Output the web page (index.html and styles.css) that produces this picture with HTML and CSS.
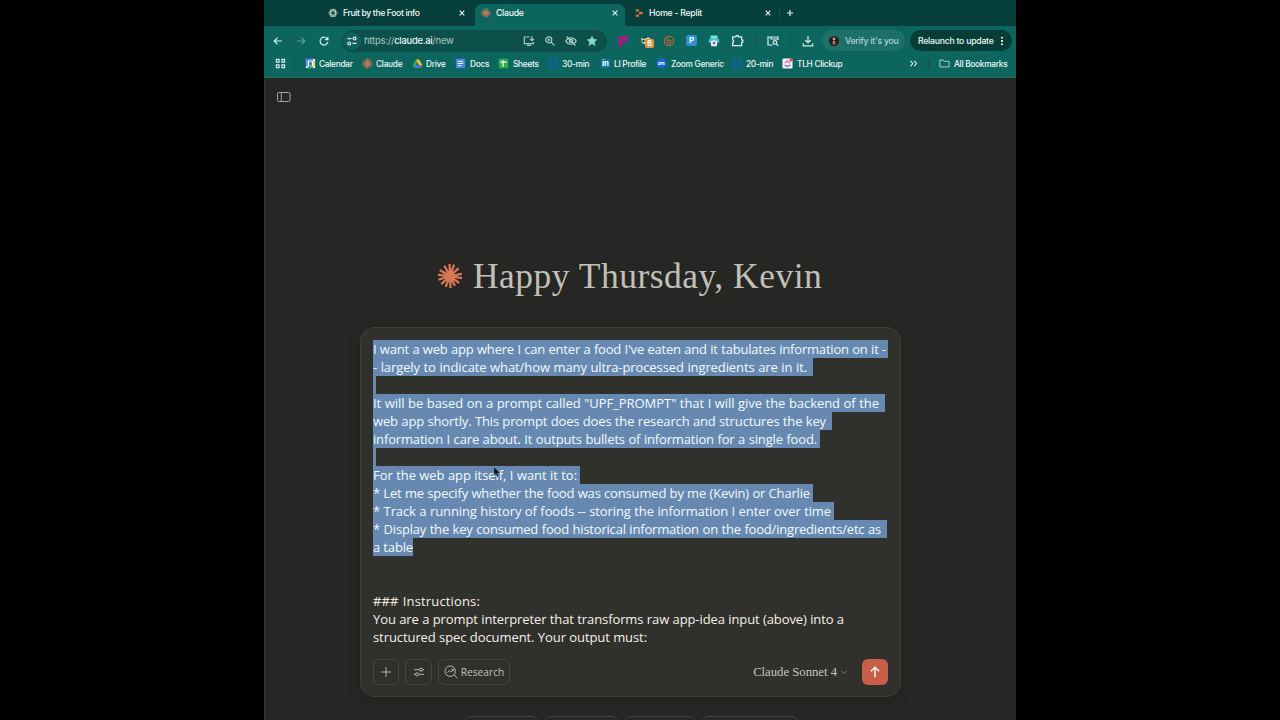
FILE: index.html
```html
<!DOCTYPE html>
<html lang="en">
<head>
  <meta charset="UTF-8">
  <title>Claude</title>
  <link rel="stylesheet" href="styles.css">
</head>
<body>
  <div class="browser">
    <!-- Tabs -->
    <div class="tabs">
      <div class="tab">
        <svg class="fav" viewBox="0 0 12 12" fill="none" stroke="#c3d6d4" stroke-width="0.9"><ellipse cx="6" cy="6" rx="5" ry="2.5"/><ellipse cx="6" cy="6" rx="5" ry="2.5" transform="rotate(60 6 6)"/><ellipse cx="6" cy="6" rx="5" ry="2.5" transform="rotate(120 6 6)"/></svg>
        <span class="tab-title t-fruit">Fruit by the Foot info</span>
        <svg class="close" viewBox="0 0 8 8"><path d="M1.700 1.700l4.600 4.600M6.300 1.700L1.700 6.300"/></svg>
      </div>
      <div class="tab active">
        <svg class="fav" viewBox="0 0 24 24"><use href="#burst"/></svg>
        <span class="tab-title">Claude</span>
        <svg class="close" viewBox="0 0 8 8"><path d="M1.700 1.700l4.600 4.600M6.300 1.700L1.700 6.300"/></svg>
      </div>
      <div class="tab">
        <svg class="fav" viewBox="0 0 12 12" fill="#e0702e"><rect x="2" y="1.5" width="4" height="2.8" rx=".6"/><rect x="6" y="4.6" width="4.4" height="2.8" rx=".6"/><rect x="2" y="7.7" width="4" height="2.8" rx=".6"/></svg>
        <span class="tab-title">Home - Replit</span>
        <svg class="close" viewBox="0 0 8 8"><path d="M1.700 1.700l4.600 4.600M6.300 1.700L1.700 6.300"/></svg>
      </div>
      <i class="sep"></i>
      <svg class="new-tab" viewBox="0 0 8 8"><path d="M4 .9v6.2M.9 4h6.2"/></svg>
    </div>

    <!-- Toolbar -->
    <div class="toolbar">
      <div class="nav">
        <svg viewBox="0 0 12 12"><path d="M10 6H2.3M5.6 2.6L2.2 6l3.4 3.4"/></svg>
        <svg class="dim" viewBox="0 0 12 12"><path d="M2 6h7.7M6.4 2.6L9.8 6 6.4 9.4"/></svg>
        <svg viewBox="0 0 12 12"><path d="M9.4 4.2A3.9 3.9 0 1 0 9.8 7M9.9 1.8v2.9H7"/></svg>
      </div>
      <div class="address">
        <span class="site"><svg viewBox="0 0 12 12"><path d="M1.500 3.600h4M6.500 8.400h4"/><circle cx="8.600" cy="3.600" r="1.400"/><circle cx="3.300" cy="8.400" r="1.400"/></svg></span>
        <span class="url">https://<b>claude.ai</b>/new</span>
        <svg viewBox="0 0 12 12"><path d="M6.500 2H1.300v6.600h9.200V7M3.800 10.400h4.400M9 1.200v4.300M7.200 4L9 5.700 10.800 4"/></svg>
        <svg viewBox="0 0 12 12"><circle cx="4.800" cy="4.800" r="3"/><path d="M7 7l3.600 3.600M3.500 4.800h2.600M4.800 3.500v2.600"/></svg>
        <svg viewBox="0 0 12 12"><path d="M.8 6C3 1.700 9 1.700 11.200 6 9 10.300 3 10.300 .8 6zM1.500 1.500l9 9"/><circle cx="6" cy="6" r="1.700"/></svg>
        <svg class="star" viewBox="0 0 12 12"><path d="M6 .6l1.600 3.500 3.800.4-2.800 2.600.8 3.900L6 9.100 2.600 11l.8-3.900L.6 4.500l3.800-.4z"/></svg>
      </div>
      <div class="extensions">
        <svg class="flat" viewBox="0 0 12 12"><path fill="#a41c7b" d="M1.500 1h9.500v5.500H8V8H5v3.500H1.500z"/><path fill="#3c5470" d="M4.500 3.300h2.500v1H4.500zM4.500 5.700H6v1H4.500zM8 3h1.500v1.300H8z"/></svg>
        <span class="badged">
          <svg class="flat" viewBox="0 0 12 12"><path d="M1 3l3 1 4-2 3 2v4L7 10 2 8z" fill="#cbd1bd"/><path d="M2.500 5h2v2h-2zM6.500 4.500h3v2h-3zM4 2h3v1H4z" fill="#25352d"/></svg>
          <i>6</i>
        </span>
        <svg class="bitly" viewBox="0 0 12 12"><circle cx="6" cy="6" r="4.600"/><path d="M4.500 2.800v5.500M4.500 6.500c0-2 3.500-2 3.500.2S4.500 9 4.500 6.700"/></svg>
        <span class="ext-p">P</span>
        <svg class="flat" viewBox="0 0 12 12"><rect x="2.500" y=".6" width="7" height="4" rx="1" fill="#7be3e4"/><rect x=".7" y="3.500" width="10.600" height="4.500" rx="1.500" fill="#42bfc8"/><rect x="3" y="5.500" width="6" height="5.800" rx=".7" fill="#e4eef2"/><circle cx="6" cy="8" r="1.300" fill="#8c4b87"/></svg>
        <svg class="puzzle" viewBox="0 0 12 12"><path d="M1.500 2.700h3a1.300 1.300 0 0 1 2.600 0h2.700v2.600a1.300 1.300 0 0 1 0 2.600v2.800H1.500V7.900a1.400 1.400 0 0 0 0-2.600z"/></svg>
        <i class="sep"></i>
        <svg viewBox="0 0 12 12"><path d="M5.500 10H1V2h10v3M4 2v2h7"/><circle cx="7.900" cy="7.400" r="1.800"/><path d="M9.200 8.800l2 2"/></svg>
        <i class="sep"></i>
        <svg viewBox="0 0 12 12"><path d="M6 1v6.500M3.300 5L6 7.700 8.700 5M1.300 8.300v2.500h9.400V8.300"/></svg>
      </div>
      <div class="verify">
        <svg class="flat" viewBox="0 0 12 12"><circle cx="6" cy="6" r="5.500" fill="#182622" stroke="#61776d" stroke-width=".6"/><circle cx="6" cy="4" r="1.400" fill="#d2a18c"/><path d="M4.500 6h3l.5 4H4z" fill="#702f30"/><path d="M5.600 6h.8v3h-.8z" fill="#eee"/></svg>
        <span>Verify it's you</span>
      </div>
      <div class="relaunch"><span>Relaunch to update</span><i class="dots"></i></div>
    </div>

    <!-- Bookmarks -->
    <div class="bookmarks">
      <svg class="apps" viewBox="0 0 12 12"><path d="M1.500 1.500h3v3h-3zM7.500 1.500h3v3h-3zM1.500 7.500h3v3h-3zM7.500 7.500h3v3h-3z"/></svg>
      <i class="sep"></i>
      <div class="bm bm-calendar"><svg viewBox="0 0 12 12"><path fill="#fff" d="M1 1h10v10H1z"/><path fill="#4d8df5" d="M1 1h8v2H3v6H1z"/><path fill="#f8c62f" d="M9 3h2v6H9z"/><path fill="#31a96a" d="M3 9h6v2H3z"/><path fill="#3672d9" d="M4.500 4h3v4.500h-3z"/></svg>Calendar</div>
      <div class="bm bm-claude"><svg viewBox="0 0 24 24"><use href="#burst"/></svg>Claude</div>
      <div class="bm bm-drive"><svg viewBox="0 0 12 12"><path fill="#35a764" d="M4.200 1.500L.7 8l1.800 2.800L6.200 4.500z"/><path fill="#f6c332" d="M4.200 1.500h3.600L11.400 8H7.800z"/><path fill="#437fe6" d="M4 8h7.400l-1.900 2.800h-7z"/><path fill="#de5248" d="M8.500 8h2.900L9.500 10.800z"/></svg>Drive</div>
      <div class="bm bm-docs"><svg viewBox="0 0 12 12"><rect x="1" y=".7" width="10" height="10.600" rx="1" fill="#4c83e8"/><path stroke="#fff" d="M3 3.700h6M3 6h6M3 8.300h4"/></svg>Docs</div>
      <div class="bm bm-sheets"><svg viewBox="0 0 12 12"><rect x=".8" y=".8" width="10.400" height="10.400" rx="1" fill="#27ad4a"/><path stroke="#fff" stroke-width="1.500" d="M2.500 4.500h7M5.500 2.500v7"/></svg>Sheets</div>
      <div class="bm bm-min"><svg viewBox="0 0 12 12" fill="none" stroke="#1560b8" stroke-width="1.200"><path d="M1.500 2h9v8.500h-9zM4 .8v3M8 .8v3M3.500 6.500h5"/></svg>30-min</div>
      <div class="bm bm-li"><svg viewBox="0 0 12 12"><rect x="1" y="1" width="10" height="10" rx="1" fill="#1674a5"/><text x="2.200" y="9.200" font-size="8.500" font-weight="700" fill="#fff">in</text></svg>LI Profile</div>
      <div class="bm bm-zoom"><svg viewBox="0 0 12 12"><circle cx="6" cy="6" r="5.500" fill="#1762e6"/><text x="1.600" y="7.800" font-size="5.500" font-weight="700" fill="#fff">zm</text></svg>Zoom Generic</div>
      <div class="bm bm-min20"><svg viewBox="0 0 12 12" fill="none" stroke="#1560b8" stroke-width="1.200"><path d="M1.500 2h9v8.500h-9zM4 .8v3M8 .8v3M3.500 6.500h5"/></svg>20-min</div>
      <div class="bm bm-clickup"><svg viewBox="0 0 12 12"><rect x=".5" y=".5" width="11" height="11" rx="1.500" fill="#f6f2fa"/><path d="M3 5.500L6 3l3 2.500" fill="none" stroke="#e565a3" stroke-width="1.400"/><path d="M3 7.500c1.800 2.300 4.200 2.300 6 0" fill="none" stroke="#7356d8" stroke-width="1.400"/><circle cx="10" cy="2" r="1.800" fill="#e2443c"/></svg>TLH Clickup</div>
      <svg class="more" viewBox="0 0 12 12"><path d="M2.700 3.200L5.300 6 2.700 8.800M6.700 3.200L9.300 6 6.700 8.800"/></svg>
      <i class="sep"></i>
      <div class="bm bm-all"><svg viewBox="0 0 12 12" fill="none" stroke="#b9d5d0"><path d="M1 2.200h3.500l1.200 1.400H11v6.200H1z"/></svg>All Bookmarks</div>
    </div>

    <!-- Page -->
    <main class="page">
      <svg class="sidebar-icon" viewBox="0 0 14 10"><rect x=".5" y=".5" width="12.500" height="9" rx="1.200"/><path d="M4.300 .5v9"/></svg>

      <h1 class="greeting">
        <svg viewBox="0 0 24 24"><g id="burst" stroke="#d97757" stroke-width="2.100"><path d="M12 12L11.600 .8M12 12L15.800 1.500M12 12L20 4.800M12 12L22.900 10M12 12L23 14M12 12L20.500 18.500M12 12L16.500 21M12 12L12.500 23.200M12 12L8 22M12 12L4 19.500M12 12L1.300 15.500M12 12L.8 11M12 12L2.500 6.500M12 12L6.800 2.500"/></g></svg>
        <span>Happy Thursday, Kevin</span>
      </h1>

      <div class="composer">
        <div class="prompt">
          <p class="sel l1">I want a web app where I can enter a food I've eaten and it tabulates information on it -</p>
          <p class="sel l2">- largely to indicate what/how many ultra-processed ingredients are in it.</p>
          <p class="sel blank"></p>
          <p class="sel l4">It will be based on a prompt called "UPF_PROMPT" that I will give the backend of the</p>
          <p class="sel l5">web app shortly. This prompt does does the research and structures the key</p>
          <p class="sel l6">information I care about. It outputs bullets of information for a single food.</p>
          <p class="sel blank"></p>
          <p class="sel l8">For the web app itself, I want it to:</p>
          <p class="sel l9">* Let me specify whether the food was consumed by me (Kevin) or Charlie</p>
          <p class="sel l10">* Track a running history of foods -- storing the information I enter over time</p>
          <p class="sel l11">* Display the key consumed food historical information on the food/ingredients/etc as</p>
          <p class="sel l12">a table</p>
          <p></p>
          <p></p>
          <p class="l15">### Instructions:</p>
          <p class="l16">You are a prompt interpreter that transforms raw app-idea input (above) into a</p>
          <p class="l17">structured spec document. Your output must:</p>
          <svg class="cursor" viewBox="0 0 8 12"><path d="M1 1v8.500l2-1.800 1.300 3 1.500-.7-1.300-2.800h2.700z" fill="#0b0e12" stroke="#6d87a3" stroke-width=".5"/></svg>
        </div>
        <div class="actions">
          <button class="btn"><svg viewBox="0 0 14 14"><path d="M7 2.200v9.600M2.200 7h9.600"/></svg></button>
          <button class="btn tools"><svg viewBox="0 0 14 14"><path d="M2 4.700h5.500M10.500 4.700H12M2 9.300h1.500M6.500 9.300H12"/><circle cx="9" cy="4.700" r="1.500"/><circle cx="5" cy="9.300" r="1.500"/></svg></button>
          <button class="btn research"><svg viewBox="0 0 14 14"><circle cx="6.200" cy="6.200" r="5.200"/><path d="M10 10l3.500 3.300M3.300 7.500l2-1.800 1.500 1.300 2.400-2.500M7.300 4.300h2v2"/></svg><span>Research</span></button>
          <div class="model"><span>Claude Sonnet 4</span><svg viewBox="0 0 8 8"><path d="M1 2.800l3 2.700 3-2.700"/></svg></div>
          <button class="send"><svg viewBox="0 0 14 14"><path d="M7 12.200V2.300M2.900 6.300L7 2.200l4.100 4.100"/></svg></button>
        </div>
      </div>

      <div class="chips"><i class="c1"></i><i class="c2"></i><i class="c3"></i><i class="c4"></i></div>
    </main>
  </div>
</body>
</html>
```
FILE: styles.css
```css
* {
  box-sizing: border-box;
}

body {
  margin: 0;
  height: 720px;
  background: #000;
  overflow: hidden;
  font-family: Inter, "Liberation Sans", sans-serif;
}

svg {
  display: block;
  flex: none;
}

.browser {
  width: 752px;
  height: 720px;
  margin: 0 auto;
  background: #262624;
  overflow: hidden;
  color: #eef8f6;
  font-size: 8.7px;
  font-weight: 500;
  letter-spacing: -0.27px;
}

/* tabs */
.tabs {
  display: flex;
  align-items: center;
  height: 26px;
  padding-left: 58px;
  background: #063f3b;
}

.tab {
  display: flex;
  align-items: center;
  width: 153px;
  height: 26px;
  padding: 0 9px 1px 6px;
}

.tab.active {
  align-self: flex-end;
  height: 22px;
  width: 150px;
  margin-right: 3px;
  padding-right: 6px;
  padding-bottom: 5px;
  background: #0c665e;
  border-radius: 7px 7px 0 0;
}

.fav {
  width: 10px;
  height: 10px;
  margin-right: 5px;
}

.tab-title {
  flex: 1;
  white-space: nowrap;
}

.t-fruit {
  letter-spacing: -0.4px;
}

.close {
  width: 8px;
  height: 8px;
}

.close path,
.new-tab path {
  fill: none;
  stroke: #e4f1ef;
  stroke-width: 1.2;
}

.tabs .sep {
  margin-left: -2px;
  background: #0e5a53;
}

.new-tab {
  width: 8px;
  height: 8px;
  margin: 0 0 1px 6px;
}

/* toolbar */
.toolbar {
  display: flex;
  align-items: center;
  height: 28px;
  background: #0c665e;
  padding: 1px 4px 0 8px;
}

.toolbar svg {
  width: 12px;
  height: 12px;
  fill: none;
  stroke: #dcedeb;
  stroke-width: 1.2;
}

.toolbar .flat {
  stroke: none;
}

.nav {
  display: flex;
  gap: 11px;
  width: 70px;
}

.nav .dim {
  stroke: #62a09a;
}

.address {
  display: flex;
  align-items: center;
  width: 265px;
  height: 22px;
  border-radius: 11px;
  background: #0c4f4b;
  padding-right: 9px;
  gap: 9px;
}

.address > svg {
  stroke: #a9c9c5;
}

.address .star {
  fill: #82dccc;
  stroke: none;
}

.site {
  display: flex;
  align-items: center;
  justify-content: center;
  width: 18px;
  height: 18px;
  margin-left: 1px;
  border-radius: 9px;
  background: #0e625b;
}

.url {
  flex: 1;
  margin-left: -6px;
  color: #98bbb8;
  font-size: 9.4px;
}

.url b {
  color: #eef8f6;
  font-weight: 500;
}

.extensions {
  display: flex;
  align-items: center;
  justify-content: space-between;
  width: 197px;
  margin-left: 10px;
}

.toolbar .bitly {
  stroke: #b56435;
}

.toolbar .puzzle {
  width: 13px;
  height: 13px;
}

.badged {
  position: relative;
}

.badged i {
  position: absolute;
  left: 5px;
  top: 4px;
  width: 9px;
  height: 9px;
  border-radius: 2px;
  background: #e29a42;
  color: #fff;
  font: 700 7px/9px Inter, sans-serif;
  text-align: center;
}

.ext-p {
  width: 11px;
  height: 11px;
  border-radius: 2px;
  background: #2d91d5;
  color: #fff;
  font-size: 8px;
  font-weight: 700;
  line-height: 11px;
  text-align: center;
}

.sep {
  width: 1px;
  height: 10px;
  background: #14504a;
}

.verify {
  display: flex;
  align-items: center;
  width: 83px;
  height: 21px;
  margin-left: 8px;
  padding-left: 6px;
  gap: 5px;
  border-radius: 11px;
  background: #1c7069;
  color: #b5d5d1;
  white-space: nowrap;
  letter-spacing: -0.25px;
}

.relaunch {
  display: flex;
  align-items: center;
  width: 102px;
  height: 21px;
  margin-left: 5px;
  padding: 0 9px 0 8px;
  justify-content: space-between;
  border-radius: 11px;
  background: #063d39;
  white-space: nowrap;
  letter-spacing: -0.25px;
}

.dots {
  width: 2px;
  height: 10px;
  background: radial-gradient(circle, #e4f1ef 0.9px, transparent 1.1px) 0 0 / 2px 3.33px;
}

/* bookmarks */
.bookmarks {
  display: flex;
  align-items: center;
  height: 24px;
  padding: 0 0 4px 11px;
  background: #0c665e;
  border-bottom: 1px solid #1b6f67;
  font-size: 8.3px;
}

.bookmarks svg {
  width: 11px;
  height: 11px;
}

.bookmarks .apps,
.bookmarks .more {
  fill: none;
  stroke: #dcedeb;
  stroke-width: 1.2;
}

.apps {
  margin-right: 8px;
}

.bm {
  display: flex;
  align-items: center;
  gap: 3px;
  white-space: nowrap;
}

.bm-calendar { width: 57px; margin-left: 10px; }
.bm-claude { width: 50px; }
.bm-drive { width: 43px; }
.bm-docs { width: 43px; gap: 4px; }
.bm-sheets { width: 49px; gap: 4px; }
.bm-min { width: 53px; gap: 4px; }
.bm-li { width: 56px; }
.bm-zoom { width: 75px; gap: 4px; }
.bm-min20 { width: 51px; gap: 4px; }
.bm-clickup { width: 126px; gap: 4px; }
.bm-all { margin-left: 10px; gap: 4px; }
.more { margin-right: 9px; }

/* page */
.page {
  height: 642px;
  padding-top: 14px;
  border-left: 1px solid #363634;
  letter-spacing: 0;
}

.sidebar-icon {
  width: 14px;
  height: 10px;
  margin-left: 12px;
  fill: none;
  stroke: #a5a49e;
  stroke-width: 1;
}

.greeting {
  display: flex;
  align-items: center;
  height: 44px;
  margin: 152px 0 0 172px;
  color: #c2c0b6;
  font: 400 35.5px/44px "Liberation Serif", serif;
}

.greeting svg {
  width: 26px;
  height: 26px;
  margin-right: 10px;
}

.greeting span {
  letter-spacing: 0.48px;
  white-space: nowrap;
}

.composer {
  display: flex;
  flex-direction: column;
  width: 541px;
  height: 370px;
  margin: 29px 0 0 95px;
  padding: 12px 12px 11px;
  background: #30302c;
  border: 1px solid #3e3e3a;
  border-radius: 14px;
  box-shadow: 0 3px 14px rgba(0, 0, 0, 0.12);
}

.prompt {
  position: relative;
  height: 306px;
  color: #f3f1e9;
  font: 400 13px/18px "Open Sans", "Noto Sans", sans-serif;
}

.prompt p {
  height: 18px;
  margin: 0;
  white-space: nowrap;
  text-align-last: justify;
}

.prompt .sel {
  background: #6789b1;
  color: #f0f9ff;
}

.prompt .blank { width: 3px; }
.l1 { width: 515px; padding-right: 2px; letter-spacing: -0.2px; }
.l2 { width: 440px; padding-right: 6px; letter-spacing: -0.1px; }
.l4 { width: 512px; padding-right: 6px; letter-spacing: -0.05px; }
.l5 { width: 459px; padding-right: 6px; letter-spacing: -0.13px; }
.l6 { width: 447px; padding-right: 3px; letter-spacing: -0.16px; }
.l8 { width: 207px; padding-right: 3px; letter-spacing: -0.05px; }
.l9 { width: 440px; padding-right: 3px; letter-spacing: -0.16px; }
.l10 { width: 461px; padding-right: 3px; letter-spacing: -0.1px; }
.l11 { width: 514px; padding-right: 6px; letter-spacing: -0.2px; }
.l12 { width: 40px; letter-spacing: -0.15px; }
.l15 { width: 107px; letter-spacing: 0.15px; }
.l16 { width: 471px; letter-spacing: -0.1px; }
.l17 { width: 274px; letter-spacing: -0.08px; }

.cursor {
  position: absolute;
  left: 120px;
  top: 126px;
  width: 8px;
  height: 12px;
}

.actions {
  display: flex;
  align-items: center;
  margin-top: 13px;
  gap: 6px;
}

.btn {
  display: flex;
  align-items: center;
  justify-content: center;
  width: 26px;
  height: 26px;
  padding: 0;
  background: none;
  border: 1px solid #454540;
  border-radius: 6px;
}

.btn svg {
  width: 14px;
  height: 14px;
  fill: none;
  stroke: #b8b6ac;
  stroke-width: 1;
}

.tools {
  width: 27px;
}

.research {
  width: 72px;
  gap: 3px;
  color: #c2c0b6;
  font: 400 10.2px "Open Sans", "Noto Sans", sans-serif;
}

.model {
  display: flex;
  align-items: center;
  margin-left: auto;
  gap: 3px;
  margin-right: 8px;
  color: #c8c6bc;
  font: 400 12.7px "Liberation Serif", serif;
}

.model svg {
  width: 8px;
  height: 8px;
  fill: none;
  stroke: #76756f;
}

.send {
  display: flex;
  align-items: center;
  justify-content: center;
  width: 26px;
  height: 26px;
  padding: 0;
  border: none;
  border-radius: 6px;
  background: #c65f45;
}

.send svg {
  width: 14px;
  height: 14px;
  fill: none;
  stroke: #fff;
  stroke-width: 1.4;
}

.chips {
  display: flex;
  gap: 7px;
  margin: 19px 0 0 200px;
}

.chips i {
  height: 26px;
  border: 1px solid #41413e;
  border-radius: 6px;
}

.c1 { width: 73px; }
.c2 { width: 73px; }
.c3 { width: 70px; }
.c4 { width: 96px; }
```
